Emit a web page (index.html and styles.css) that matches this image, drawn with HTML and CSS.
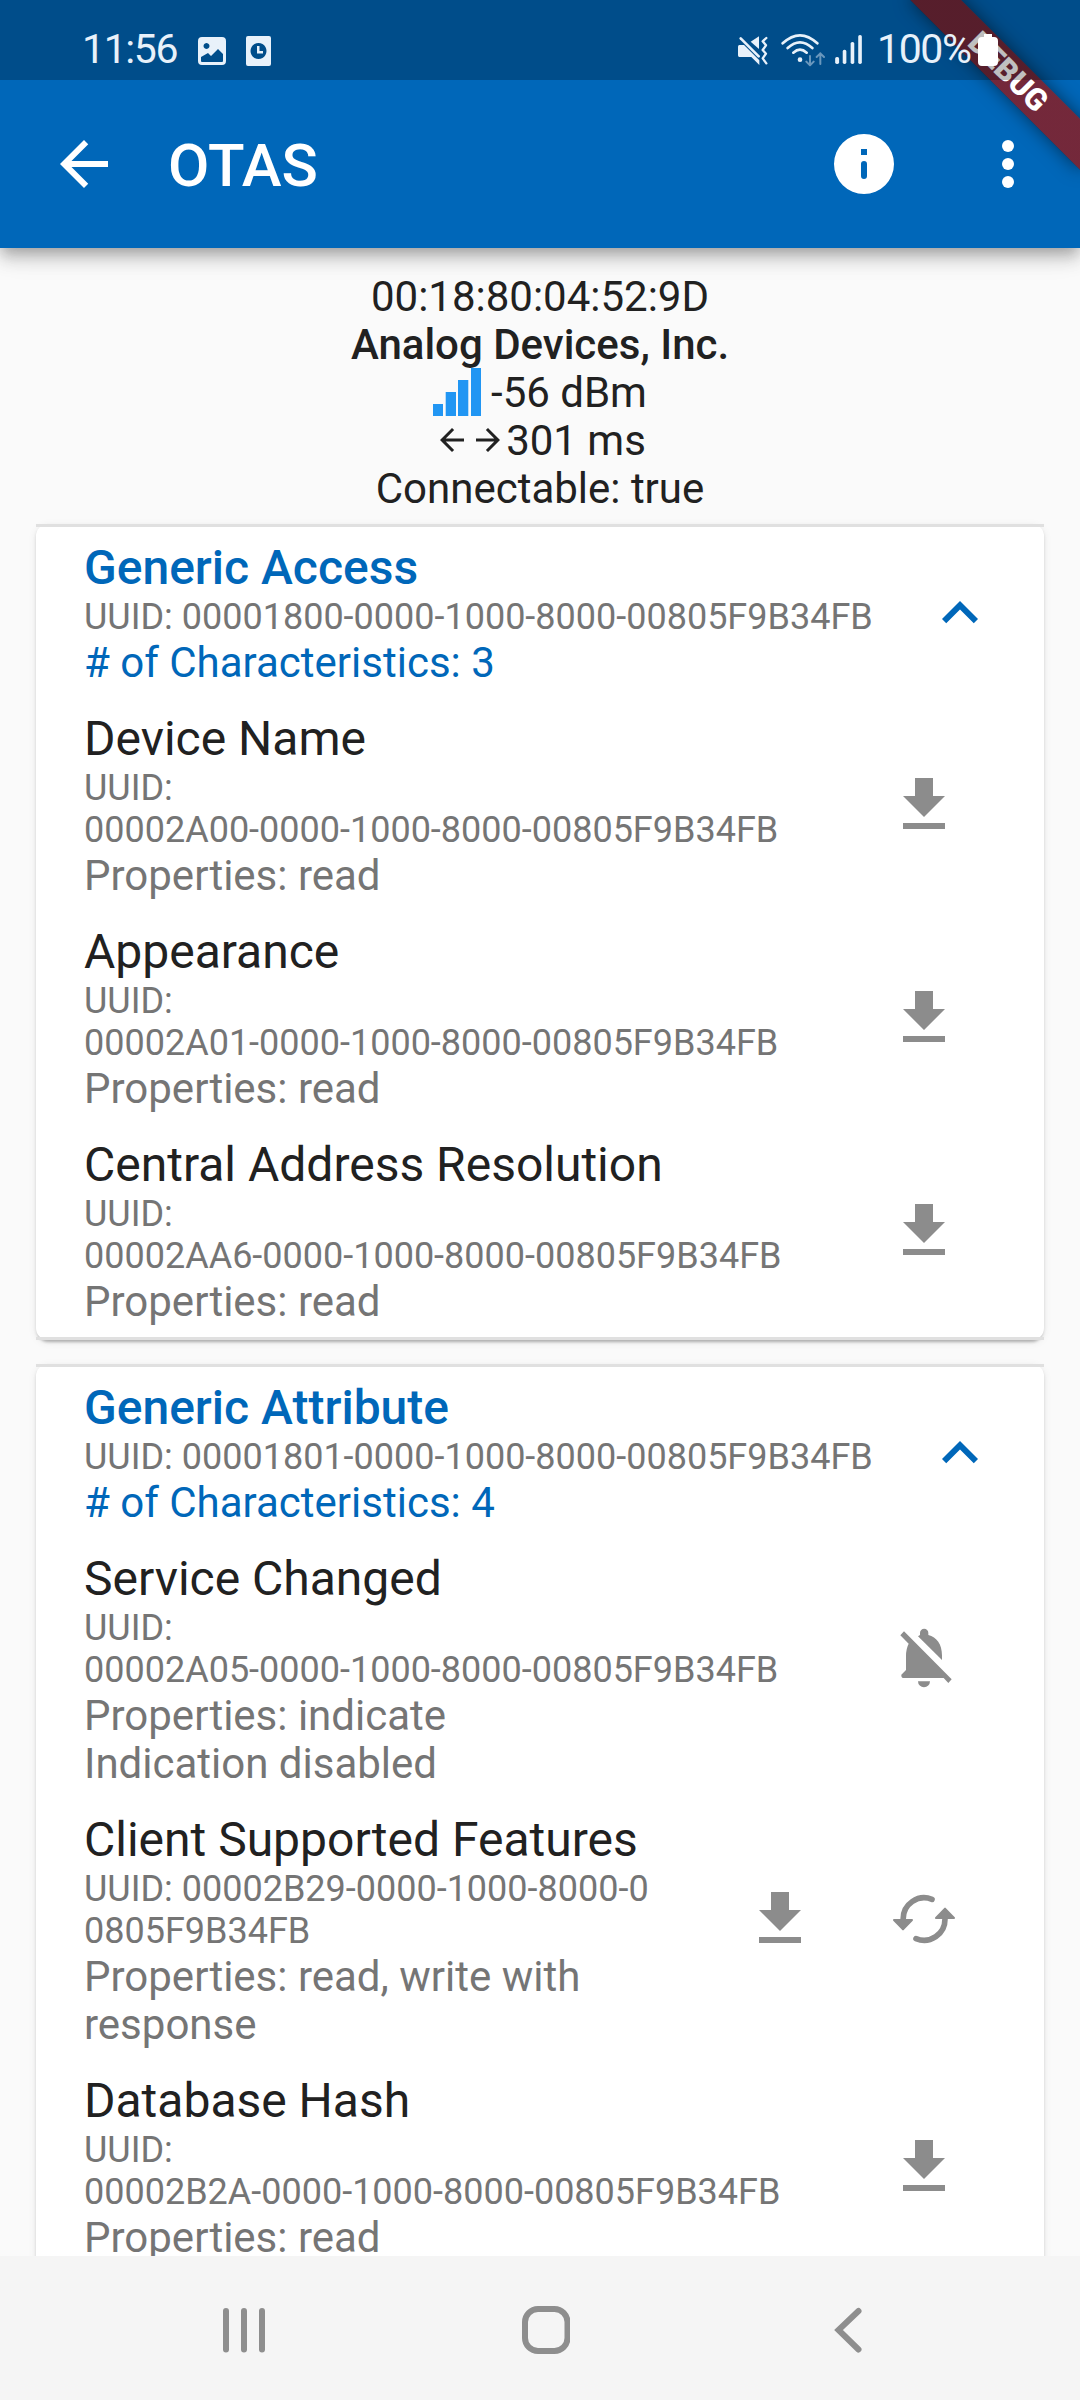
FILE: index.html
```html
<!DOCTYPE html>
<html lang="en">
<head>
<meta charset="utf-8">
<title>OTAS</title>
<link rel="stylesheet" href="styles.css">
</head>
<body>
<svg class="defs" aria-hidden="true">
  <symbol id="download" viewBox="0 0 24 24"><path d="M19 9h-4V3H9v6H5l7 7 7-7zM5 18v2h14v-2H5z"/></symbol>
  <symbol id="chevron" viewBox="0 0 24 24"><path d="M12 8l-6 6 1.41 1.41L12 10.83l4.59 4.58L18 14z"/></symbol>
  <symbol id="back" viewBox="0 0 24 24"><path d="M20 11H7.83l5.59-5.59L12 4l-8 8 8 8 1.41-1.41L7.83 13H20v-2z"/></symbol>
</svg>
<div class="screen">
  <header class="status">
    <span class="clock">11:56</span>
    <svg class="st-image" viewBox="0 0 28 28"><path fill-rule="evenodd" d="M4 0h20a4 4 0 0 1 4 4v20a4 4 0 0 1-4 4H4a4 4 0 0 1-4-4V4a4 4 0 0 1 4-4zM8.500 6a3 3 0 1 0 .01 0zM3 20v4a1 1 0 0 0 1 1h20a1 1 0 0 0 1-1v-7l-5-5-7 7-3-3z"/></svg>
    <svg class="st-doc" viewBox="0 0 25 30"><path fill-rule="evenodd" d="M2 0h21a2 2 0 0 1 2 2v26a2 2 0 0 1-2 2H2a2 2 0 0 1-2-2V2a2 2 0 0 1 2-2zM12.500 7a8 8 0 1 0 .01 0zM11 10h2.500v5H17v2.500h-6z"/></svg>
    <div class="st-right">
      <svg class="st-mute" viewBox="114 102 90 90"><path d="M118 132h14l46 46v14l-24-24h-36q-4 0-4-5v-26q0-5 4-5z"/><path d="M177 106v38l-25-22z"/><path class="ln" d="M122 112l54 54"/><path class="ln thin" d="M199 111L188 121L198 133L188 147L198 158L188 172L199 187"/></svg>
      <svg class="st-wifi" viewBox="244 96 132 102"><path class="ln" d="M249 127q52-48 104 0M264 141q37-34 74 0M281 155q20-18 40 0"/><circle cx="301" cy="176" r="7"/><path class="ln dim" d="M331 165v28m-11-11l11 11 11-11M362 189v-32m-11 11l11-11 11 11"/></svg>
      <svg class="st-signal" viewBox="405 104 81 88"><rect x="405" y="171" width="12" height="21" rx="5"/><rect x="428" y="149" width="11" height="43" rx="5"/><rect x="452" y="125" width="11" height="67" rx="5"/><rect x="475" y="104" width="11" height="88" rx="5"/></svg>
      <span class="battery-text">100%</span>
      <svg class="st-battery" viewBox="0 0 20 32"><path d="M6 0h8v3h2a4 4 0 0 1 4 4v21a4 4 0 0 1-4 4H4a4 4 0 0 1-4-4V7a4 4 0 0 1 4-4h2z"/></svg>
    </div>
  </header>
  <div class="appbar">
    <svg class="icon72" viewBox="0 0 24 24"><use href="#back"/></svg>
    <h1>OTAS</h1>
    <svg class="icon72 info" viewBox="0 0 24 24"><path fill-rule="evenodd" d="M12 2a10 10 0 1 0 0 20 10 10 0 0 0 0-20zM11 7h2v2h-2zM12 11a1 1 0 0 1 1 1v4a1 1 0 0 1-2 0v-4a1 1 0 0 1 1-1z"/></svg>
    <svg class="icon72" viewBox="0 0 24 24"><circle cx="12" cy="6" r="2"/><circle cx="12" cy="12" r="2"/><circle cx="12" cy="18" r="2"/></svg>
  </div>
  <div class="ribbon-clip"><div class="ribbon">DEBUG</div></div>

  <main>
    <section class="device">
      <p>00:18:80:04:52:9D</p>
      <p class="vendor">Analog Devices, Inc.</p>
      <p class="with-icon rssi"><svg class="bars" viewBox="0 0 48 48"><path d="M0 36h10v12H0zM12.700 24h10.300v24H12.700zM25 12h10.300v36H25zM38 0h10v48H38z"/></svg>-56 dBm</p>
      <p class="with-icon"><svg class="arrow" viewBox="0 0 24 24"><use href="#back"/></svg><svg class="arrow flip" viewBox="0 0 24 24"><use href="#back"/></svg>301 ms</p>
      <p>Connectable: true</p>
    </section>

    <article class="card">
      <div class="head">
        <div class="text">
          <h2>Generic Access</h2>
          <p class="uuid">UUID: 00001800-0000-1000-8000-00805F9B34FB</p>
          <p class="count"># of Characteristics: 3</p>
        </div>
        <svg class="icon72 chev"><use href="#chevron"/></svg>
      </div>
      <div class="row">
        <div class="text">
          <h3>Device Name</h3>
          <p class="uuid">UUID:<br>00002A00-0000-1000-8000-00805F9B34FB</p>
          <p class="props">Properties: read</p>
        </div>
        <svg class="icon72"><use href="#download"/></svg>
      </div>
      <div class="row">
        <div class="text">
          <h3>Appearance</h3>
          <p class="uuid">UUID:<br>00002A01-0000-1000-8000-00805F9B34FB</p>
          <p class="props">Properties: read</p>
        </div>
        <svg class="icon72"><use href="#download"/></svg>
      </div>
      <div class="row">
        <div class="text">
          <h3>Central Address Resolution</h3>
          <p class="uuid">UUID:<br>00002AA6-0000-1000-8000-00805F9B34FB</p>
          <p class="props">Properties: read</p>
        </div>
        <svg class="icon72"><use href="#download"/></svg>
      </div>
    </article>

    <article class="card">
      <div class="head">
        <div class="text">
          <h2>Generic Attribute</h2>
          <p class="uuid">UUID: 00001801-0000-1000-8000-00805F9B34FB</p>
          <p class="count"># of Characteristics: 4</p>
        </div>
        <svg class="icon72 chev"><use href="#chevron"/></svg>
      </div>
      <div class="row tall">
        <div class="text">
          <h3>Service Changed</h3>
          <p class="uuid">UUID:<br>00002A05-0000-1000-8000-00805F9B34FB</p>
          <p class="props">Properties: indicate<br>Indication disabled</p>
        </div>
        <svg class="icon72" viewBox="864 1028 216 216"><path d="M912 1056L1055 1200 1045 1211 1031 1196H912Q903 1196 904 1186L918 1172V1130Q918 1108 926 1093L901 1068ZM954 1206H990A18 18 0 0 1 954 1206ZM954 1071L960 1067V1061A12.500 12.500 0 0 1 985 1061V1067C1010 1073 1026 1095 1026 1128V1142Z"/></svg>
      </div>
      <div class="row tall">
        <div class="text">
          <h3>Client Supported Features</h3>
          <p class="uuid">UUID: 00002B29-0000-1000-8000-0<br>0805F9B34FB</p>
          <p class="props">Properties: read, write with<br>response</p>
        </div>
        <svg class="icon72"><use href="#download"/></svg>
        <svg class="icon72 sync" viewBox="504 69 216 216"><path class="arc" d="M549.500 179V177A63 63 0 0 1 636 118M675 175V177A63 63 0 0 1 588 236"/><path class="tip" d="M522 180H576L549 208ZM648 174H702L675 146Z"/></svg>
      </div>
      <div class="row">
        <div class="text">
          <h3>Database Hash</h3>
          <p class="uuid">UUID:<br>00002B2A-0000-1000-8000-00805F9B34FB</p>
          <p class="props">Properties: read</p>
        </div>
        <svg class="icon72"><use href="#download"/></svg>
      </div>
    </article>
  </main>

  <nav class="navbar">
    <svg viewBox="0 0 48 48"><path d="M6 5v38.500M24 5v38.500M42 5v38.500"/></svg>
    <svg viewBox="0 0 48 48"><rect x="3" y="3" width="42.500" height="42" rx="13"/></svg>
    <svg viewBox="0 0 48 48"><path d="M34.500 5L14.500 24 34.500 43.500"/></svg>
  </nav>
</div>
</body>
</html>
```
FILE: styles.css
```css
* { box-sizing: border-box; }
body { margin: 0; font-family: Roboto, sans-serif; color: #212121; }
h1, h2, h3, p { margin: 0; font-weight: 400; }
svg { flex: none; display: block; fill: currentColor; }
.defs { position: absolute; width: 0; height: 0; }

.screen {
  position: relative;
  width: 1080px;
  height: 2400px;
  overflow: hidden;
  display: flex;
  flex-direction: column;
  background: #fafafa;
}

/* Status bar: a dark veil over the app bar colour */
.status {
  position: relative;
  z-index: 4;
  flex: none;
  display: flex;
  align-items: center;
  height: 80px;
  padding: 19px 82px 0 82px;
  background: rgba(0, 0, 0, .25);
  color: #e8f1fa;
  font-size: 41px;
  line-height: 48px;
  letter-spacing: -1.4px;
  white-space: nowrap;
}
.clock { width: 116px; margin-top: -2px; }
.st-image { width: 28px; height: 28px; margin-top: 2px; }
.st-doc { width: 25px; height: 30px; margin: 2px 0 0 20px; }
.st-right { margin-left: auto; display: flex; align-items: center; }
.st-mute { width: 30px; height: 30px; }
.st-wifi { width: 44px; height: 34px; margin-left: 13px; }
.st-signal { width: 27px; height: 29px; margin-left: 10px; }
.battery-text { width: 98px; margin: -2px 0 0 15px; }
.st-battery { width: 20px; height: 32px; margin-left: 3px; color: #fff; }
.ln { fill: none; stroke: currentColor; stroke-width: 8; stroke-linecap: round; stroke-linejoin: round; }
.thin { stroke-width: 7; }
.dim { opacity: .45; stroke-width: 6; }

.appbar {
  position: relative;
  z-index: 2;
  flex: none;
  display: flex;
  align-items: center;
  height: 248px;
  margin-top: -80px;
  padding: 80px 36px 0 48px;
  background: #0067b9;
  color: #fff;
  box-shadow: 0 6px 12px -3px rgba(0, 0, 0, .2), 0 12px 15px rgba(0, 0, 0, .14), 0 3px 30px rgba(0, 0, 0, .12);
}
.appbar h1 {
  flex: 1;
  margin-left: 48px;
  padding-top: 4px;
  font-size: 60px;
  font-weight: 500;
  line-height: 72px;
}
.info { margin-right: 72px; }
.icon72 { width: 72px; height: 72px; }

.ribbon-clip {
  position: absolute;
  z-index: 3;
  top: 0;
  right: 0;
  width: 260px;
  height: 260px;
  overflow: hidden;
}
.ribbon {
  position: absolute;
  left: 140px;
  top: 84px;
  width: 240px;
  height: 36px;
  transform-origin: 120px -84px;
  transform: rotate(45deg);
  background: linear-gradient(rgba(183, 28, 28, .63), rgba(183, 28, 28, .63)), rgba(0, 0, 0, .4);
  box-shadow: 0 0 18px rgba(0, 0, 0, .5);
  color: #fff;
  font-size: 30.6px;
  font-weight: 900;
  line-height: 36px;
  text-align: center;
}

main { flex: 1; min-height: 0; overflow: hidden; padding: 25px 36px 0; }
.device {
  margin-bottom: 11px;
  font-size: 42px;
  line-height: 48px;
  text-align: center;
}
.device p { height: 48px; }
.device .vendor { font-weight: 500; }
.with-icon { display: flex; justify-content: center; }
.bars { width: 48px; height: 48px; margin: -1px 10px 0 0; color: #2196f3; }
.arrow { width: 36px; height: 36px; margin-top: 5px; }
.flip { transform: scaleX(-1); }

.card {
  position: relative;
  margin-bottom: 24px;
  border-radius: 12px;
  background: #fff;
  box-shadow: 0 5px 3px -3px rgba(0, 0, 0, .16), 0 2px 3px rgba(0, 0, 0, .12), 0 2px 8px rgba(0, 0, 0, .08);
  padding: 3px 0;
}
/* Square dividers along the top and bottom edges */
.card::before, .card::after {
  content: "";
  position: absolute;
  left: 0;
  right: 0;
  height: 3px;
  background: #e0e0e0;
}
.card::before { top: 0; }
.card::after { bottom: 0; }
.head, .row { display: flex; align-items: center; padding: 12px 84px 11px 48px; }
.row { color: #8c8c8c; }
.head { padding-right: 48px; color: #0067b9; }
.text { flex: 1; min-width: 0; white-space: nowrap; }
h2, h3 { font-size: 48px; line-height: 57px; }
h2 { font-weight: 500; }
h3 { color: #212121; }
.uuid { margin-bottom: 1px; color: #757575; font-size: 36px; line-height: 42px; }
.count, .props { font-size: 42px; line-height: 48px; }
.props { color: #757575; }
.row .icon72 + .icon72 { margin-left: 72px; }
.tall { align-items: flex-start; }
.tall .icon72 { margin-top: 72px; }
.arc { fill: none; stroke: currentColor; stroke-width: 17; stroke-linecap: round; }
.tip { stroke: currentColor; stroke-width: 6; stroke-linejoin: round; }

.navbar {
  position: relative;
  z-index: 2;
  flex: none;
  display: flex;
  justify-content: space-between;
  height: 144px;
  padding: 50px 208px 0 220px;
  background: #f5f5f5;
  color: #8e8e8e;
}
.navbar svg { width: 48px; height: 48px; fill: none; stroke: currentColor; stroke-width: 6; stroke-linecap: round; }
```
